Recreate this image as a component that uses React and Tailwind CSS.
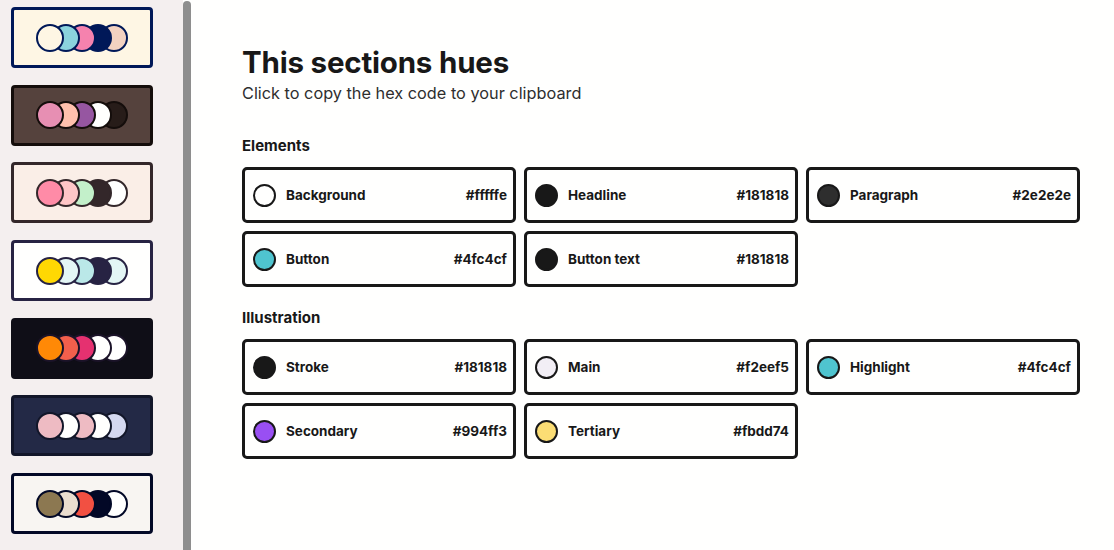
import React from 'react';

const palettes = [
    { bg: 'bg-[#fef6e4]', border: 'border-[#001858]', ring: 'border-[#001858]', colors: ['#fef6e4', '#8bd3dd', '#f582ae', '#001858', '#f3d2c1'] },
    { bg: 'bg-[#55423d]', border: 'border-[#140d0b]', ring: 'border-[#140d0b]', colors: ['#e78fb3', '#ffc0ad', '#9656a1', '#fffffe', '#271c19'] },
    { bg: 'bg-[#faeee7]', border: 'border-[#33272a]', ring: 'border-[#33272a]', colors: ['#ff8ba7', '#ffc6c7', '#c3f0ca', '#33272a', '#fffffe'] },
    { bg: 'bg-[#fffffe]', border: 'border-[#272343]', ring: 'border-[#272343]', colors: ['#ffd803', '#e3f6f5', '#bae8e8', '#272343', '#e3f6f5'] },
    { bg: 'bg-[#0f0e17]', border: 'border-[#0f0e17]', ring: 'border-[#1b1328]', colors: ['#ff8906', '#f25f4c', '#e53170', '#fffffe', '#fffffe'] },
    { bg: 'bg-[#232946]', border: 'border-[#121629]', ring: 'border-[#121629]', colors: ['#eebbc3', '#fffffe', '#eebbc3', '#fffffe', '#d4d8f0'] },
    { bg: 'bg-[#f8f5f2]', border: 'border-[#020826]', ring: 'border-[#020826]', colors: ['#8c7851', '#eaddcf', '#f25042', '#020826', '#fffffe'] },
];

const zLayers = ['z-50', 'z-40', 'z-30', 'z-20', 'z-10'];

const elements = [
    { name: 'Background', hex: '#fffffe' },
    { name: 'Headline', hex: '#181818' },
    { name: 'Paragraph', hex: '#2e2e2e' },
    { name: 'Button', hex: '#4fc4cf' },
    { name: 'Button text', hex: '#181818' },
];

const illustration = [
    { name: 'Stroke', hex: '#181818' },
    { name: 'Main', hex: '#f2eef5' },
    { name: 'Highlight', hex: '#4fc4cf' },
    { name: 'Secondary', hex: '#994ff3' },
    { name: 'Tertiary', hex: '#fbdd74' },
];

function PaletteCard({ palette }) {
    return (
        <div className={`h-[61px] w-[142px] rounded-[4px] border-[3px] ${palette.bg} ${palette.border} flex items-center justify-center`}>
            <div className="flex items-center">
                {palette.colors.map((c, i) => (
                    <div
                        key={i}
                        className={`relative ${zLayers[i]} h-[28px] w-[28px] rounded-full border-[2.5px] ${palette.ring} ${i > 0 ? '-ml-[12px]' : ''}`}
                        style={{ backgroundColor: c }}
                    />
                ))}
            </div>
        </div>
    );
}

function HueCard({ item }) {
    return (
        <div className="h-[56px] rounded-[5px] border-[3px] border-[#181818] bg-[#fffffe] flex items-center pl-[8px] pr-[6px] text-[13.5px] leading-[18px] font-bold text-[#181818] cursor-pointer">
            <div
                className="h-[23px] w-[23px] rounded-full border-2 border-[#181818]"
                style={{ backgroundColor: item.hex }}
            />
            <span className="ml-[10px]">{item.name}</span>
            <span className="ml-auto">{item.hex}</span>
        </div>
    );
}

export default function App() {
    return (
        <div className="flex h-[550px] w-full overflow-hidden bg-[#fffffe]" style={{ fontFamily: '"Inter", "Liberation Sans", sans-serif' }}>
            {/* palette list */}
            <div className="w-[183px] shrink-0 bg-[#f4efef] pl-[11px] pt-[7px] flex flex-col gap-[16.7px]">
                {palettes.map((p, i) => (
                    <PaletteCard key={i} palette={p} />
                ))}
            </div>
            <div className="w-[8px] shrink-0 mt-[1px] rounded-t-full bg-[#8e8e8e]" />

            {/* main */}
            <div className="flex-1 pl-[51px] pt-[43px]">
                <h1 className="text-[29.5px] font-bold leading-[38px] tracking-[-0.2px] text-[#181818]">This sections hues</h1>
                <p className="mt-[2px] text-[16.3px] leading-[20px] text-[#2e2e2e]">Click to copy the hex code to your clipboard</p>

                <h2 className="mt-[33px] text-[15px] font-bold leading-[20px] text-[#181818]">Elements</h2>
                <div className="mt-[11px] grid w-[838px] grid-cols-3 gap-[8px]">
                    {elements.map((item) => (
                        <HueCard key={item.name} item={item} />
                    ))}
                </div>

                <h2 className="mt-[21px] text-[15px] font-bold leading-[20px] text-[#181818]">Illustration</h2>
                <div className="mt-[11px] grid w-[838px] grid-cols-3 gap-[8px]">
                    {illustration.map((item) => (
                        <HueCard key={item.name} item={item} />
                    ))}
                </div>
            </div>
        </div>
    );
}
